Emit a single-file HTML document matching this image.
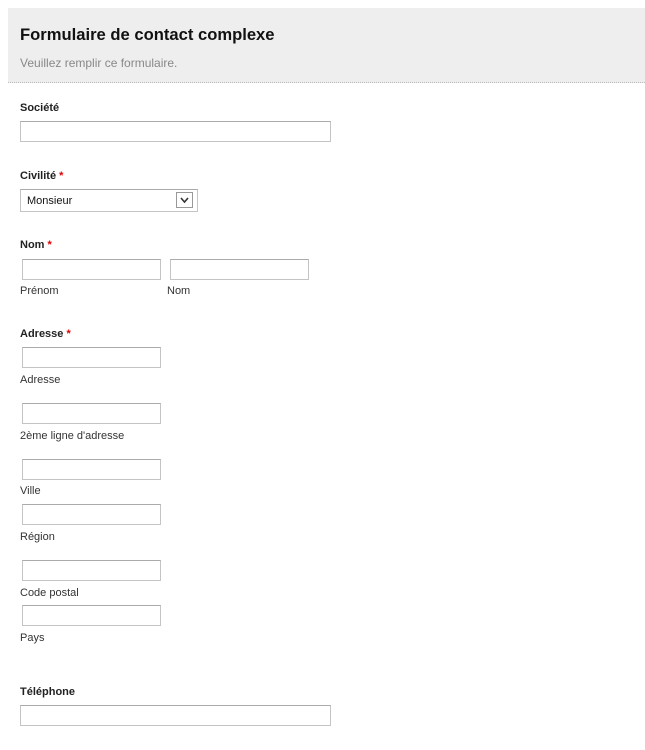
<!DOCTYPE html>
<html><head><meta charset="utf-8"><style>
body{margin:0;width:645px;height:750px;background:#fff;font-family:"Liberation Sans",Arial,sans-serif;position:relative;overflow:hidden}
.hd{position:absolute;left:8px;top:8px;width:637px;height:74px;background:#eeeeee;border-bottom:1px dotted #bbb}
.t{position:absolute;left:20px;top:25px;font-size:16.6px;font-weight:bold;color:#111}
.s{position:absolute;left:20px;top:56px;font-size:12px;color:#888}
.l{position:absolute;left:20px;font-size:11px;font-weight:bold;color:#222}
.l b{color:#d00;font-weight:bold}
.sl{position:absolute;font-size:11px;color:#333}
.i{position:absolute;border:1px solid #c4c4c4;border-top-color:#aaa;background:#fff;box-sizing:border-box}
</style></head><body>
<div class="hd"></div>
<div class="t">Formulaire de contact complexe</div>
<div class="s">Veuillez remplir ce formulaire.</div>

<div class="l" style="top:102px">Société</div>
<div class="i" style="left:20px;top:121px;width:311px;height:21px"></div>

<div class="l" style="top:170px">Civilité <b>*</b></div>
<div class="i" style="left:20px;top:189px;width:178px;height:23px"></div>
<div class="sl" style="left:27px;top:195px;color:#111">Monsieur</div>
<div style="position:absolute;left:176px;top:192px;width:17px;height:16px;border:1px solid #999;box-sizing:border-box;background:#fff"></div>
<svg style="position:absolute;left:180px;top:197px" width="9" height="7"><path d="M1 1 L4.5 5 L8 1" stroke="#333" stroke-width="1.6" fill="none"/></svg>

<div class="l" style="top:239px">Nom <b>*</b></div>
<div class="i" style="left:22px;top:259px;width:139px;height:21px"></div>
<div class="i" style="left:170px;top:259px;width:139px;height:21px"></div>
<div class="sl" style="left:20px;top:285px">Prénom</div>
<div class="sl" style="left:167px;top:285px">Nom</div>

<div class="l" style="top:328px">Adresse <b>*</b></div>
<div class="i" style="left:22px;top:347px;width:139px;height:21px"></div>
<div class="sl" style="left:20px;top:374px">Adresse</div>
<div class="i" style="left:22px;top:403px;width:139px;height:21px"></div>
<div class="sl" style="left:20px;top:430px">2ème ligne d'adresse</div>
<div class="i" style="left:22px;top:459px;width:139px;height:21px"></div>
<div class="sl" style="left:20px;top:485px">Ville</div>
<div class="i" style="left:22px;top:504px;width:139px;height:21px"></div>
<div class="sl" style="left:20px;top:531px">Région</div>
<div class="i" style="left:22px;top:560px;width:139px;height:21px"></div>
<div class="sl" style="left:20px;top:587px">Code postal</div>
<div class="i" style="left:22px;top:605px;width:139px;height:21px"></div>
<div class="sl" style="left:20px;top:632px">Pays</div>

<div class="l" style="top:686px">Téléphone</div>
<div class="i" style="left:20px;top:705px;width:311px;height:21px"></div>
</body></html>
